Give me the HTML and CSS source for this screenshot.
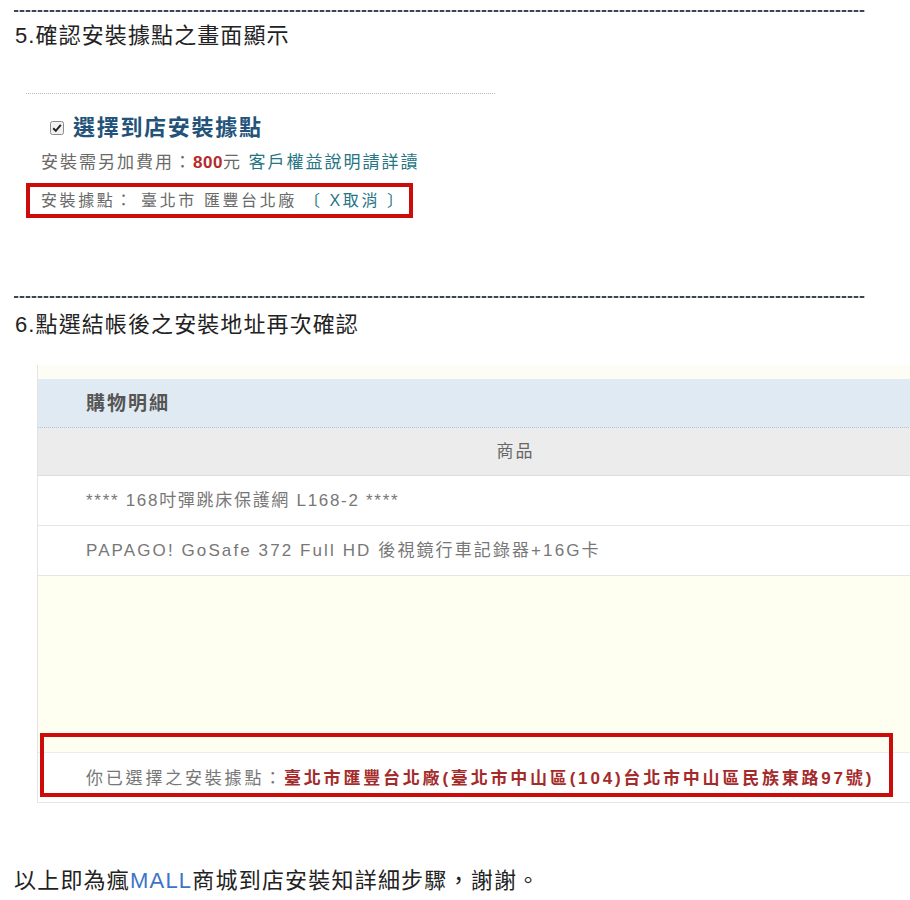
FILE: index.html
```html
<!DOCTYPE html>
<html lang="zh-Hant">
<head>
<meta charset="utf-8">
<title>到店安裝步驟</title>
<link rel="stylesheet" href="styles.css">
</head>
<body>
<div class="page">
  <div class="sep sep-first"></div>
  <h2 class="step">5.確認安裝據點之畫面顯示</h2>

  <div class="shot1">
    <div class="dotline"></div>
    <div class="pick">
      <svg class="cb" width="14" height="14" viewBox="0 0 14 14" aria-hidden="true">
        <rect x="0.5" y="0.5" width="13" height="13" rx="2" fill="#f1f1f1" stroke="#8a8a8a"/>
        <path d="M3.2 7.2 L5.8 9.8 L10.8 3.8" fill="none" stroke="#222" stroke-width="2"/>
      </svg>
      <span class="pick-label">選擇到店安裝據點</span>
    </div>
    <p class="fee">安裝需另加費用：<b class="price">800</b>元 <span class="link">客戶權益說明請詳讀</span></p>
    <p class="loc-box">安裝據點： 臺北市 匯豐台北廠 <span class="link">〔 X取消 〕</span></p>
  </div>

  <div class="sep sep-second"></div>
  <h2 class="step">6.點選結帳後之安裝地址再次確認</h2>

  <div class="shot2">
    <div class="tbl">
      <div class="strip"></div>
      <div class="tbl-head">購物明細</div>
      <div class="tbl-sub">商品</div>
      <div class="tbl-row">**** 168吋彈跳床保護網 L168-2 ****</div>
      <div class="tbl-row tbl-row-wide">PAPAGO! GoSafe 372 Full HD 後視鏡行車記錄器+16G卡</div>
      <div class="tbl-blank"></div>
      <div class="tbl-row tbl-addr">你已選擇之安裝據點：<b class="addr">臺北市匯豐台北廠(臺北市中山區(104)台北市中山區民族東路97號)</b></div>
    </div>
    <div class="mark"></div>
  </div>

  <p class="ending">以上即為瘋<span class="mall">MALL</span>商城到店安裝知詳細步驟，謝謝。</p>
</div>
</body>
</html>
```

FILE: styles.css
```css
html, body {
  margin: 0;
  padding: 0;
  background: #ffffff;
}

body {
  font-family: "Liberation Sans", "Noto Sans CJK TC", sans-serif;
  color: #222;
  overflow: hidden;
}

.page {
  padding-left: 14px;
  padding-bottom: 20px;
}

.sep {
  width: 851px;
  height: 2px;
  background: repeating-linear-gradient(to right, #3f4650 0 4px, #b9c9d6 4px 6px);
}

.sep-first {
  margin-top: 10px;
}

.sep-second {
  margin-top: 78px;
}

.step {
  margin: 9px 0 0 1px;
  font-size: 22px;
  font-weight: normal;
  line-height: 30px;
  letter-spacing: 1.1px;
  color: #222;
}

.sep-second + .step {
  margin-top: 12px;
}

/* section 5 screenshot */
.shot1 {
  margin-left: 12px;
}

.dotline {
  margin-top: 42px;
  width: 469px;
  height: 1px;
  background: repeating-linear-gradient(to right, #b8b8b8 0 1px, transparent 1px 2px);
}

.pick {
  margin-top: 19px;
  margin-left: 24px;
  height: 30px;
  display: flex;
  align-items: center;
  gap: 9px;
}

.cb {
  flex: none;
}

.pick-label {
  font-size: 22px;
  font-weight: bold;
  letter-spacing: 1.7px;
  color: #23537a;
  line-height: 30px;
}

.fee {
  margin: 8px 0 0 15px;
  font-size: 17px;
  line-height: 24px;
  letter-spacing: 2px;
  color: #6a6a6a;
}

.price {
  color: #b52a2a;
  font-weight: bold;
  letter-spacing: 0.5px;
}

.link {
  color: #267585;
}

.loc-box {
  margin: 8px 0 0 0;
  width: 387px;
  height: 35px;
  box-sizing: border-box;
  border: 4px solid #cc0b0b;
  padding-left: 11px;
  font-size: 16px;
  line-height: 27px;
  letter-spacing: 2.6px;
  color: #6a6a6a;
  white-space: nowrap;
}

/* section 6 screenshot */
.shot2 {
  position: relative;
  margin-left: 23px;
  margin-top: 25px;
  overflow: hidden;
}

.tbl {
  width: 955px;
  border-left: 1px solid #e3e3e3;
  color: #777;
}

.strip {
  height: 14px;
  background: #fdfdf6;
}

.tbl-head {
  height: 49px;
  box-sizing: border-box;
  background: #dfeaf2;
  border-bottom: 1px dotted #b9c0c6;
  padding-left: 48px;
  font-size: 19px;
  font-weight: bold;
  letter-spacing: 2px;
  line-height: 50px;
  color: #555;
}

.tbl-sub {
  height: 48px;
  box-sizing: border-box;
  background: #ececec;
  border-bottom: 1px solid #dedede;
  text-align: center;
  font-size: 17px;
  letter-spacing: 2px;
  line-height: 48px;
  color: #666;
}

.tbl-row {
  height: 50px;
  box-sizing: border-box;
  background: #ffffff;
  border-bottom: 1px solid #e6e6e6;
  padding-left: 48px;
  font-size: 17px;
  letter-spacing: 1.7px;
  line-height: 49px;
  white-space: nowrap;
}

.tbl-row-wide {
  letter-spacing: 2.1px;
}

.tbl-blank {
  height: 176px;
  background: #fffff1;
  border-bottom: 1px solid #ececec;
}

.tbl-addr {
  letter-spacing: 2.8px;
  line-height: 52px;
}

.addr {
  color: #a52b2b;
}

.mark {
  position: absolute;
  left: 3px;
  top: 368px;
  width: 853px;
  height: 64px;
  box-sizing: border-box;
  border: 4px solid #cc0b0b;
}

.ending {
  margin: 63px 0 0 0;
  font-size: 22px;
  line-height: 30px;
  letter-spacing: 1.2px;
  color: #222;
}

.mall {
  color: #3b74c9;
}
```
